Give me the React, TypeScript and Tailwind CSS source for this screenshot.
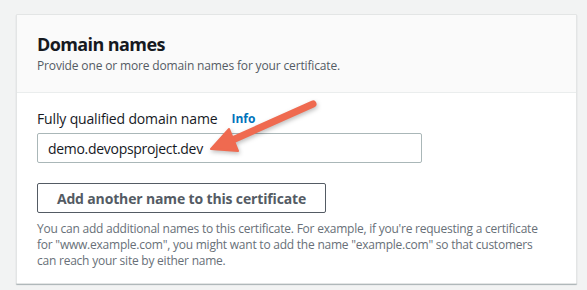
export default function App() {
  return (
    <div
      className="relative w-[587px] h-[290px] bg-[#f2f3f3] pt-[14px] pl-[16px]"
      style={{ fontFamily: '"Open Sans", "Noto Sans", Arial, sans-serif' }}
    >
      {/* Card */}
      <div className="w-[561px] h-[270px] bg-white border border-[#e3e5e5] shadow-[0_1px_1px_rgba(0,28,36,0.3)] rounded-[1px]">
        {/* Header */}
        <div className="h-[78px] bg-[#fafafa] border-b border-[#eaeded] pl-[20px] pt-[17px]">
          <h2 className="text-[18px] leading-[24px] font-bold text-[#16191f] tracking-[-0.6px]">
            Domain names
          </h2>
          <p className="mt-[2px] text-[12px] leading-[16px] text-[#545b64] tracking-[-0.15px]">
            Provide one or more domain names for your certificate.
          </p>
        </div>

        {/* Body */}
        <div className="pl-[20px] pt-[16px]">
          <div className="flex items-center gap-[14px] h-[20px]">
            <span className="text-[14px] leading-[20px] text-[#16191f] tracking-[-0.15px]">
              Fully qualified domain name
            </span>
            <span className="text-[12px] leading-[20px] font-bold text-[#0073bb]">Info</span>
          </div>
          <div className="mt-[4px] w-[385px] h-[30px] border border-[#aab7b8] rounded-[2px] flex items-center px-[10px]">
            <span className="text-[14px] text-[#16191f] tracking-[-0.3px]">demo.devopsproject.dev</span>
          </div>
          <button className="mt-[20px] w-[289px] h-[30px] border border-[#545b64] rounded-[2px] bg-white text-[14px] font-bold text-[#545b64] tracking-[-0.15px] flex items-center justify-center">
            Add another name to this certificate
          </button>
          <p className="mt-[8px] whitespace-nowrap text-[12px] leading-[16px] text-[#687078] tracking-[-0.23px]">
            You can add additional names to this certificate. For example, if you're requesting a certificate
            <br />
            for "www.example.com", you might want to add the name "example.com" so that customers
            <br />
            can reach your site by either name.
          </p>
        </div>
      </div>

      {/* Annotation arrow */}
      <svg
        className="absolute left-0 top-0 pointer-events-none"
        width="587"
        height="290"
        viewBox="0 0 587 290"
        style={{ filter: "drop-shadow(1px 2px 2px rgba(0,0,0,0.25))" }}
      >
        <line x1="313" y1="104" x2="228" y2="142" stroke="#ef6a50" strokeWidth="7" strokeLinecap="round" />
        <polygon points="211,149 229,129 238,151" fill="#ef6a50" stroke="#ef6a50" strokeWidth="2" strokeLinejoin="round" />
      </svg>
    </div>
  );
}
